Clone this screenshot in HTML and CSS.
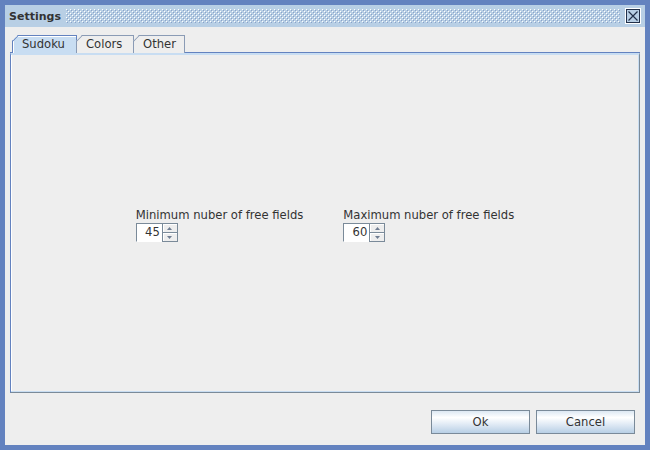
FILE: index.html
```html
<!DOCTYPE html>
<html>
<head>
<meta charset="utf-8">
<link rel="stylesheet" href="styles.css">
</head>
<body>
<div class="frame">
  <div class="titlebar">
    <span class="title">Settings</span>
    <svg class="bumps" width="100%" height="14">
      <defs>
        <pattern id="b" width="4" height="4" patternUnits="userSpaceOnUse">
          <rect x="0" y="0" width="1" height="1" fill="#ffffff"/>
          <rect x="2" y="2" width="1" height="1" fill="#ffffff"/>
          <rect x="1" y="1" width="1" height="1" fill="#8aa3c9"/>
          <rect x="3" y="3" width="1" height="1" fill="#8aa3c9"/>
        </pattern>
      </defs>
      <rect width="100%" height="14" fill="url(#b)"/>
    </svg>
    <div class="close">
      <svg width="12" height="12" viewBox="0 0 12 12"><path d="M1.5 1.5 L10.5 10.5 M10.5 1.5 L1.5 10.5" stroke="#22304a" stroke-width="1.2"/></svg>
    </div>
  </div>
  <div class="content">
    <div class="tabs">
      <div class="tab selected tab-sudoku">Sudoku</div>
      <div class="tab tab-colors">Colors</div>
      <div class="tab tab-other">Other</div>
    </div>
    <div class="panel">
      <div class="group">
        <div class="field">
          <div class="label">Minimum nuber of free fields</div>
          <div class="spinner">
            <div class="num">45</div>
            <div class="arrows">
              <div class="arr up"><svg width="5" height="3" viewBox="0 0 5 3"><path d="M0 3 L2.5 0 L5 3Z" fill="#6f7d92"/></svg></div>
              <div class="arr down"><svg width="5" height="3" viewBox="0 0 5 3"><path d="M0 0 L2.5 3 L5 0Z" fill="#6f7d92"/></svg></div>
            </div>
          </div>
        </div>
        <div class="field">
          <div class="label">Maximum nuber of free fields</div>
          <div class="spinner">
            <div class="num">60</div>
            <div class="arrows">
              <div class="arr up"><svg width="5" height="3" viewBox="0 0 5 3"><path d="M0 3 L2.5 0 L5 3Z" fill="#6f7d92"/></svg></div>
              <div class="arr down"><svg width="5" height="3" viewBox="0 0 5 3"><path d="M0 0 L2.5 3 L5 0Z" fill="#6f7d92"/></svg></div>
            </div>
          </div>
        </div>
      </div>
    </div>
    <div class="footer">
      <button class="btn">Ok</button>
      <button class="btn">Cancel</button>
    </div>
  </div>
</div>
</body>
</html>
```
FILE: styles.css
```css
* { box-sizing: border-box; }
html, body { margin: 0; padding: 0; }
body {
  width: 650px;
  height: 450px;
  font-family: "DejaVu Sans", sans-serif;
  font-size: 11.6px;
  color: #333333;
}
.frame {
  width: 650px;
  height: 450px;
  background: #6382bf;
  padding: 5px;
  display: flex;
  flex-direction: column;
}
.titlebar {
  height: 22px;
  background: #b8cfe5;
  display: flex;
  align-items: center;
  padding: 0 4px 0 4px;
  gap: 5px;
}
.title {
  font-weight: bold;
  font-size: 11px;
  color: #333333;
}
.bumps {
  flex: 1;
  display: block;
}
.close {
  width: 16px;
  height: 16px;
  border: 1px solid #ffffff;
  background: #22304a;
  padding: 1px;
  display: flex;
}
.close svg {
  background: #b8cfe5;
  width: 12px;
  height: 12px;
}
.content {
  flex: 1;
  background: #eeeeee;
  display: flex;
  flex-direction: column;
  padding: 8px 5px 11px 5px;
}
.tabs {
  display: flex;
  padding-left: 2px;
  height: 18px;
  position: relative;
  z-index: 1;
}
.tab {
  position: relative;
  height: 18px;
  padding: 0 0 0 9px;
  line-height: 16px;
  white-space: nowrap;
  border: 1px solid #8a9bb5;
  border-bottom: none;
  background: #eeeeee;
  margin-right: -1px;
  clip-path: polygon(0 6px, 6px 0, 100% 0, 100% 100%, 0 100%);
}
.tab-sudoku { width: 65px; }
.tab-colors { width: 58px; }
.tab-other { width: 52px; }
.tab::before {
  content: "";
  position: absolute;
  left: -1px;
  top: 5px;
  width: 9px;
  height: 1px;
  background: #8a9bb5;
  transform: rotate(-45deg);
  transform-origin: 0 0;
}
.tab.selected {
  background: #c8ddf2;
  border-color: #6382bf;
  box-shadow: inset 1px 1px 0 #ffffff;
}
.tab.selected::before { background: #6382bf; }
.panel {
  flex: 1;
  border: 1px solid #6382bf;
  border-right-color: #7a8a99;
  border-bottom-color: #7a8a99;
  box-shadow: inset 0 -1px 0 #c8ddf2, inset -1px 0 0 #c8ddf2, inset 1px 0 0 #ffffff;
  margin-top: -1px;
  border-top: 3px solid #c8ddf2;
  position: relative;
  display: flex;
  align-items: center;
  justify-content: center;
}
.panel::before {
  content: "";
  position: absolute;
  left: -1px;
  right: -1px;
  top: -3px;
  height: 1px;
  background: #6382bf;
}
.group {
  display: flex;
  gap: 40px;
  margin-top: 3px;
}
.field {
  display: flex;
  flex-direction: column;
}
.label {
  line-height: 15px;
  white-space: nowrap;
}
.spinner {
  display: flex;
  height: 19px;
  width: 42px;
}
.num {
  width: 26px;
  border: 1px solid #7a8a99;
  border-right: none;
  border-bottom-color: #ffffff;
  background: #ffffff;
  text-align: right;
  padding-right: 2px;
  line-height: 17px;
}
.arrows {
  width: 16px;
  display: flex;
  flex-direction: column;
}
.arr {
  flex: 1;
  border: 1px solid #7a8a99;
  background: #eeeeee;
  box-shadow: inset 1px 1px 0 #ffffff;
  display: flex;
  align-items: center;
  justify-content: center;
}
.arr.down { border-top: none; }
.footer {
  display: flex;
  justify-content: flex-end;
  gap: 6px;
  padding-top: 17px;
  padding-right: 5px;
}
.btn {
  width: 99px;
  height: 24px;
  border: 1px solid #7a8a99;
  background: linear-gradient(#dde8f3 0%, #ffffff 30%, #e6eef7 55%, #b8cfe5 100%);
  font-family: "DejaVu Sans", sans-serif;
  font-size: 11.6px;
  color: #333333;
  padding: 0;
}
```
